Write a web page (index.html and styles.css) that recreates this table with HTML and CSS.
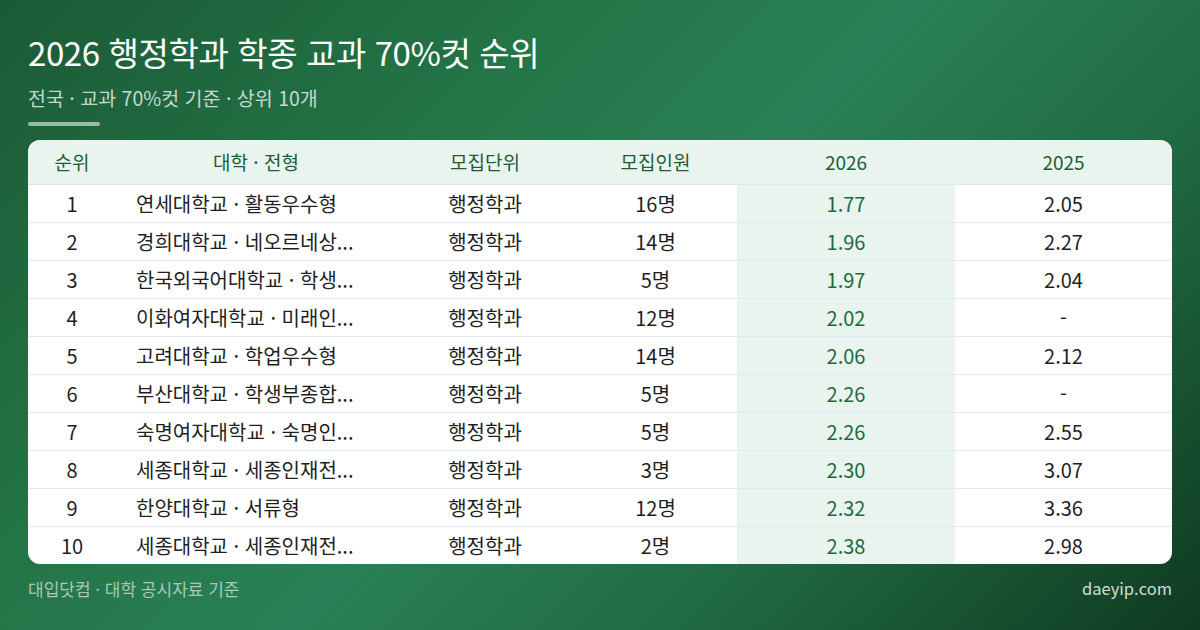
FILE: index.html
```html
<!DOCTYPE html>
<html lang="ko">
<head>
<meta charset="utf-8">
<link rel="stylesheet" href="styles.css">
</head>
<body>
<div class="page">
  <header class="head">
    <h1 class="title">2026 행정학과 학종 교과 70%컷 순위</h1>
    <p class="sub">전국 · 교과 70%컷 기준 · 상위 10개</p>
    <div class="bar"></div>
  </header>
  <div class="card">
    <table class="tbl">
      <colgroup>
        <col class="c1"><col class="c2"><col class="c3"><col class="c4"><col class="c5"><col class="c6">
      </colgroup>
      <thead>
        <tr><th>순위</th><th>대학 · 전형</th><th>모집단위</th><th>모집인원</th><th>2026</th><th>2025</th></tr>
      </thead>
      <tbody>
        <tr><td>1</td><td class="name">연세대학교 · 활동우수형</td><td>행정학과</td><td>16명</td><td class="hl">1.77</td><td>2.05</td></tr>
        <tr><td>2</td><td class="name">경희대학교 · 네오르네상...</td><td>행정학과</td><td>14명</td><td class="hl">1.96</td><td>2.27</td></tr>
        <tr><td>3</td><td class="name">한국외국어대학교 · 학생...</td><td>행정학과</td><td>5명</td><td class="hl">1.97</td><td>2.04</td></tr>
        <tr><td>4</td><td class="name">이화여자대학교 · 미래인...</td><td>행정학과</td><td>12명</td><td class="hl">2.02</td><td>-</td></tr>
        <tr><td>5</td><td class="name">고려대학교 · 학업우수형</td><td>행정학과</td><td>14명</td><td class="hl">2.06</td><td>2.12</td></tr>
        <tr><td>6</td><td class="name">부산대학교 · 학생부종합...</td><td>행정학과</td><td>5명</td><td class="hl">2.26</td><td>-</td></tr>
        <tr><td>7</td><td class="name">숙명여자대학교 · 숙명인...</td><td>행정학과</td><td>5명</td><td class="hl">2.26</td><td>2.55</td></tr>
        <tr><td>8</td><td class="name">세종대학교 · 세종인재전...</td><td>행정학과</td><td>3명</td><td class="hl">2.30</td><td>3.07</td></tr>
        <tr><td>9</td><td class="name">한양대학교 · 서류형</td><td>행정학과</td><td>12명</td><td class="hl">2.32</td><td>3.36</td></tr>
        <tr><td>10</td><td class="name">세종대학교 · 세종인재전...</td><td>행정학과</td><td>2명</td><td class="hl">2.38</td><td>2.98</td></tr>
      </tbody>
    </table>
  </div>
  <footer class="foot">
    <span class="src">대입닷컴 · 대학 공시자료 기준</span>
    <span class="site">daeyip.com</span>
  </footer>
</div>
</body>
</html>
```

FILE: styles.css
```css
* { box-sizing: border-box; }
html, body { margin: 0; padding: 0; }
body {
  width: 1200px;
  height: 630px;
  overflow: hidden;
  font-family: "Noto Sans CJK KR", "Noto Sans", sans-serif;
  background: linear-gradient(135deg, #1b5a36 0%, #237446 30%, #2a8056 50%, #206a42 72%, #0f3a20 100%);
}
.page {
  width: 1200px;
  height: 630px;
  padding: 28px 28px 0 28px;
  display: flex;
  flex-direction: column;
}
.head { display: flex; flex-direction: column; }
.title {
  margin: 0;
  font-size: 33px;
  font-weight: 400;
  line-height: 48px;
  color: #ffffff;
  letter-spacing: -0.4px;
}
.sub {
  margin: 9px 0 0 0;
  font-size: 19.5px;
  line-height: 26px;
  color: rgba(255,255,255,0.75);
}
.bar {
  margin-top: 11px;
  width: 72px;
  height: 4px;
  border-radius: 2px;
  background: rgba(255,255,255,0.55);
}
.card {
  margin-top: 14px;
  width: 1144px;
  background: #ffffff;
  border-radius: 12px;
  overflow: hidden;
}
.tbl {
  width: 100%;
  border-collapse: collapse;
  table-layout: fixed;
}
.c1 { width: 88px; }
.c2 { width: 280px; }
.c3 { width: 178px; }
.c4 { width: 163px; }
.c5 { width: 218px; }
.c6 { width: 217px; }
.tbl th {
  height: 44px;
  padding: 0;
  background: #e8f4ed;
  color: #1e5c38;
  font-size: 19px;
  font-weight: 400;
  text-align: center;
  border-bottom: 1px solid #dde6ee;
}
.tbl td {
  height: 38px;
  padding: 0;
  font-size: 20px;
  color: #1f1f1f;
  text-align: center;
  border-top: 1px solid #e2e8f0;
  white-space: nowrap;
}
.tbl tbody tr:first-child td { border-top: none; }
.tbl td.name { text-align: left; padding-left: 20px; }
.tbl td.hl { background: #e8f4ed; color: #1e6a3e; }
.foot {
  display: flex;
  justify-content: space-between;
  align-items: center;
  margin-top: 12px;
  height: 24px;
}
.src { font-size: 17px; color: rgba(255,255,255,0.6); }
.site { font-size: 16.5px; color: rgba(255,255,255,0.82); }
```
